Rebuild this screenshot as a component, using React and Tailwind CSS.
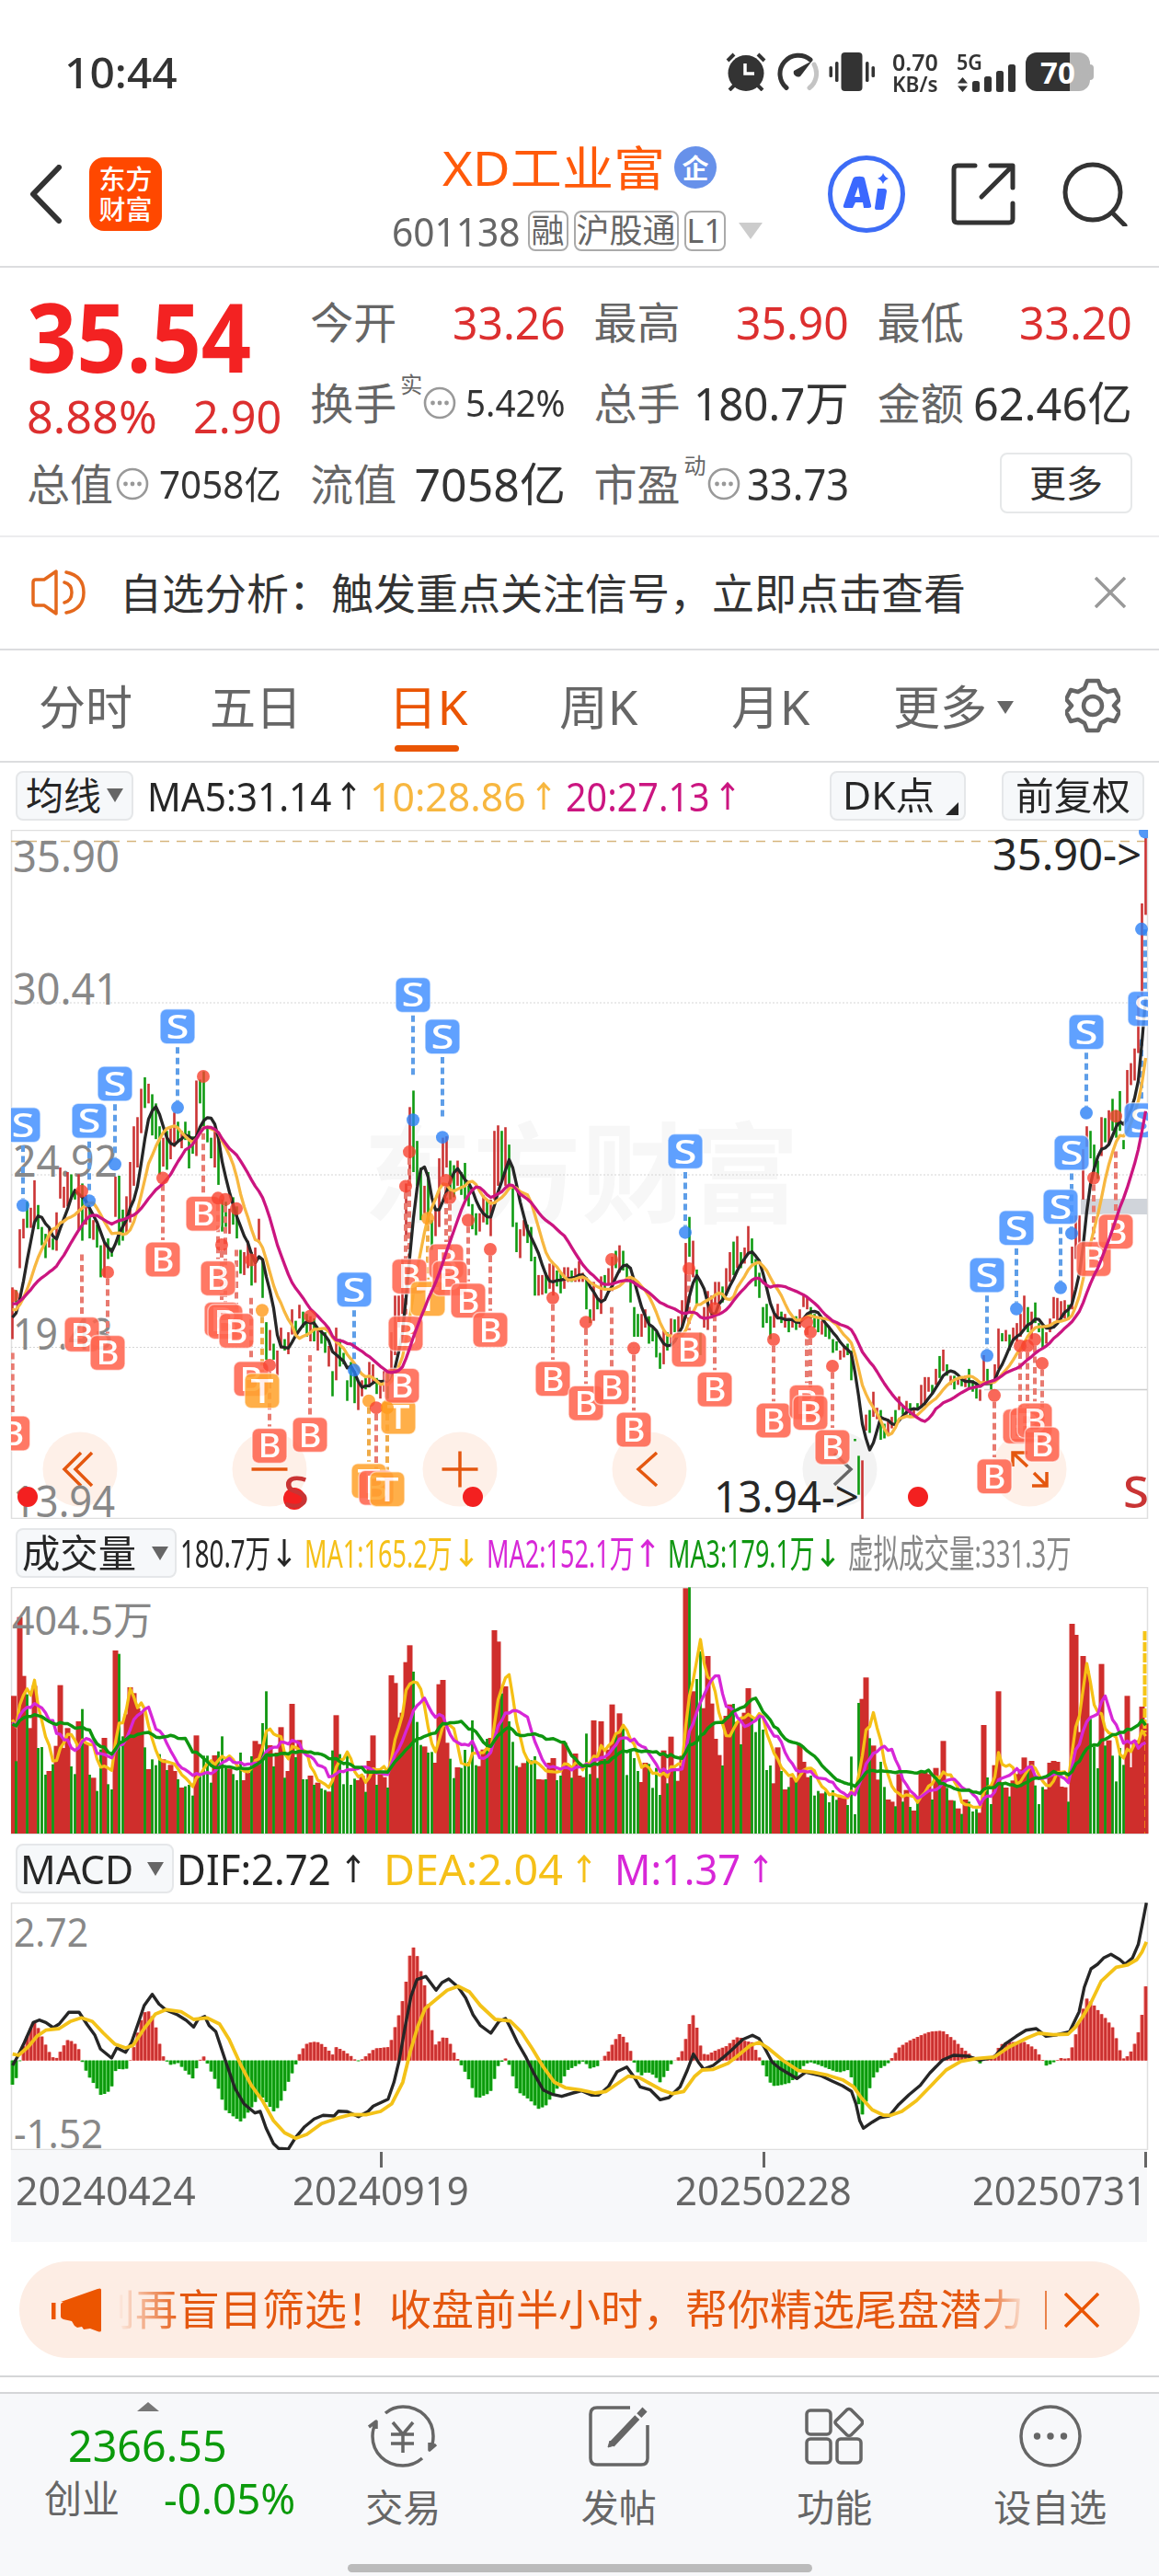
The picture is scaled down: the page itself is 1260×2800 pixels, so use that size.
import { useLayoutEffect, useRef, useState } from "react";
import clsx from "clsx";

const FONT = "font-['Noto_Sans','Noto_Sans_CJK_SC',sans-serif]";

const STEP = 4;
const FIRST_X = 13.5;
const barX = (i) => FIRST_X + i * STEP;

// Daily turnover, oldest first. Letter = candle direction, number = top edge of the bar on the plot grid.
const VOLUME = `
r385 g598 r128 r320 g380 r490 r352 g555 g552 g642 r630 g608 r548 r350 r555 r490 g615 g640 r468 g428
r540 g642 r652 g695 g560 r522 g673 g690 r237 g248 g517 r445 r357 r376 r425 r435 g553 r624 g592 g611
g575 r592 g627 r610 r630 g657 r684 g680 g675 g710 r514 g640 g580 g580 g668 r579 g566 g517 g620 r622
g640 g660 g570 r660 r635 g582 r532 r542 g474 g370 r546 g615 r570 r487 g652 r630 r411 g585 r529 g657
g657 r645 g675 r668 g687 g692 r697 g563 r448 g575 g673 g580 g675 g655 r660 r645 g698 r597 r514 g675
r640 r650 g684 r318 r343 r455 r440 r275 r220 g306 g470 g545 r550 g570 g568 r603 r347 r333 r538 g590
g653 r618 g620 g561 g600 g465 g611 r614 r560 g525 r522 r171 r208 g377 r354 g468 g535 g613 r617 r604
g594 g595 g582 r657 r658 g657 r603 r588 g660 g645 r537 r610 g652 r573 r645 r650 g508 g640 r465 g653
r468 g590 r560 r413 g510 r442 g478 g643 g565 g588 g630 r666 r603 g607 g685 g620 g708 r563 g670 r518
g620 r662 r580 r34 g31 r370 g330 g240 r425 r255 r410 r525 r578 g612 r450 r413 g411 r470 g543 r440
r360 g455 g503 g455 g495 g627 g612 r670 r553 g630 r690 g682 r650 g665 r543 r600 r650 g645 g710 g695
r703 g697 g732 g693 g724 r715 r715 g741 g583 g771 g408 r395 r325 g523 r547 r658 g600 g682 r723 r730
g745 r640 g730 r692 g747 r759 g735 r630 r632 r640 g723 r620 g650 r532 g685 r725 g727 r752 g770 r723
g730 g762 g754 r766 r480 g651 g738 r611 r370 g670 r684 g713 r661 r640 r625 r586 g620 r597 g677 g738
g682 r690 r603 r597 r600 r681 r683 g730 r150 r186 r503 r255 r303 g460 g550 g621 r281 g547 r530 g580
g664 g555 g610 r385 r618 r540 r530 r420 r475`
  .trim()
  .split(/\s+/)
  .map((s) => ({ up: s[0] === "r", top: Number(s.slice(1)) }));

// Candle extents as high,low on the price grid.
const CANDLES = `
1042,1155 1048,1075 915,1000 892,935 855,912 868,912 808,900 862,915 910,950 925,978 910,955 935,960
878,962 780,848 822,868 790,865 795,850 830,850 795,915 815,940 840,905 870,935 895,938 905,955
950,1020 945,1020 935,980 955,975 800,888 798,950 872,940 843,925 768,900 690,820 670,780 608,705
583,650 597,640 620,710 640,718 690,795 715,778 700,785 690,762 660,735 680,725 700,738 680,720
700,782 712,750 590,755 588,640 570,690 690,725 715,760 695,780 720,818 850,920 855,910 870,925
845,905 865,935 960,1012 965,1015 940,1000 965,1038 955,1032 892,945 980,1065 1118,1200 1135,1180 1165,1200
1180,1235 1130,1175 1155,1180 1140,1188 1090,1145 1115,1150 1080,1110 1095,1130 1100,1150 1105,1160 1110,1160 1130,1180
1135,1165 1140,1185 1170,1215 1225,1280 1130,1245 1155,1215 1185,1210 1245,1290 1205,1260 1225,1295 1250,1310 1245,1280
1235,1265 1205,1260 1210,1250 1240,1275 1250,1285 1225,1270 1230,1290 1140,1230 1060,1190 1060,1130 980,1100 815,940
648,820 612,790 722,820 780,895 820,880 790,900 895,960 875,930 760,910 715,800 712,780 765,850
775,845 765,820 790,840 770,850 820,865 860,915 880,928 880,920 840,900 850,905 850,930 700,850
688,820 700,810 692,820 730,820 820,910 900,965 915,978 895,930 905,945 910,985 975,1060 1015,1060
1015,1058 1010,1055 990,1045 990,1060 1005,1040 1010,1055 998,1045 998,1030 1005,1030 1000,1030 985,1030 1010,1030
1020,1090 1090,1120 1030,1115 1065,1090 1018,1100 1015,1045 1000,1035 975,1050 962,1000 950,1010 962,1005 990,1030
1020,1075 1085,1150 1100,1150 1100,1150 1090,1130 1105,1165 1130,1160 1140,1195 1185,1220 1135,1210 1140,1180 1110,1165
1112,1140 1105,1140 1070,1130 945,1110 888,975 940,1020 1003,1080 1140,1190 1085,1130 1050,1135 1060,1110 1030,1080
1030,1080 1040,1075 1000,1060 965,1030 942,1015 930,1000 965,1000 955,990 908,970 935,990 980,1040 1010,1065
1085,1130 1078,1120 1105,1155 1100,1130 1078,1110 1095,1120 1100,1130 1115,1140 1110,1130 1105,1135 1090,1130 1060,1085
1065,1090 1085,1110 1100,1130 1110,1140 1115,1145 1120,1150 1130,1155 1155,1185 1160,1180 1180,1200 1170,1195 1165,1190
1180,1245 1373,1378 1410,1495 1420,1551 1320,1355 1310,1360 1270,1325 1305,1330 1310,1375 1340,1372 1330,1365 1325,1350
1310,1345 1280,1310 1300,1320 1290,1320 1295,1325 1305,1325 1295,1310 1255,1305 1238,1300 1238,1270 1255,1275 1220,1255
1192,1240 1178,1225 1210,1235 1235,1255 1235,1265 1240,1255 1240,1258 1235,1260 1220,1262 1245,1270 1250,1285 1265,1290
1190,1250 1220,1255 1250,1265 1210,1250 1132,1220 1142,1160 1135,1160 1145,1180 1130,1160 1120,1160 1100,1150 1060,1130
1085,1140 1095,1155 1075,1120 1120,1140 1125,1175 1140,1165 1110,1140 1063,1110 1065,1115 1072,1110 1070,1110 1080,1110
953,1090 885,980 885,945 740,850 690,735 700,760 730,790 765,805 670,755 672,725 655,730 630,700
655,715 613,700 720,740 567,680 552,600 520,590 405,530 203,405 60,228`
  .trim()
  .split(/\s+/)
  .map((s) => s.split(",").map(Number));

// kind, x, dot, badge, [line start, line end]
const SIGNALS = [
  ["B", 13.7, 1060, 1361, 1185],
  ["S", 25, 863, 687],
  ["S", 97, 853, 678],
  ["S", 125, 773, 597],
  ["S", 193, 649, 472],
  ["B", 89, 832, 1145, 970],
  ["B", 117, 1009, 1185],
  ["B", 177, 803, 981],
  ["B", 221, 581, 881, 705],
  ["B", 237, 847, 1022],
  ["B", 241, 949, 1112],
  ["B", 245, 850, 1117],
  ["B", 257, 870, 1137, 960],
  ["B", 273, 982, 1242, 1065],
  ["T", 285, 1092, 1268],
  ["B", 293, 1212, 1388],
  ["B", 337, 1105, 1364, 1190],
  ["S", 385, 1223, 1047],
  ["T", 401, 1290, 1465],
  ["B", 409, 1305, 1480],
  ["T", 421, 1305, 1483],
  ["T", 433, null, 1325],
  ["B", 437, null, 1257],
  ["B", 441, 821, 1143],
  ["B", 445, 746, 1018],
  ["S", 449, 676, 403, 580],
  ["T", 465, 891, 1067],
  ["S", 481, 714, 494, 670],
  ["B", 485, 808, 985],
  ["B", 489, 846, 1022],
  ["B", 509, 895, 1071],
  ["B", 533, 959, 1135],
  ["B", 601, 1065, 1242],
  ["B", 637, 1118, 1295],
  ["B", 665, 981, 1260, 1085],
  ["B", 689, 1175, 1353],
  ["S", 745, 922, 745],
  ["B", 749, 1001, 1178],
  ["B", 777, 1088, 1265],
  ["B", 841, 1156, 1333],
  ["B", 877, 1118, 1293],
  ["B", 881, 1140, 1316],
  ["B", 905, 1214, 1391],
  ["S", 1073, 1191, 1015],
  ["B", 1081, 1278, 1455],
  ["S", 1105, 1089, 912],
  ["B", 1109, 1170, 1346],
  ["B", 1117, 1170, 1343],
  ["B", 1125, 1156, 1333],
  ["B", 1133, 1208, 1385],
  ["S", 1165, 924, 748],
  ["S", 1153, 1043, 866],
  ["S", 1181, 661, 484],
  ["B", 1189, 803, 980],
  ["B", 1213, 668, 920, 745],
  ["S", 1245, 47, 433, 260],
  ["S", 1241, 259, 677, 500],
];

const SIGNAL_FILL = { B: "#ff6650", S: "#4b95ff", T: "#ffa530" };
const SIGNAL_LINE = { B: "#e87a70", S: "#5e9ee8", T: "#efab48" };
const SIGNAL_DOT = { B: "#f8422f", S: "#2b80f5", T: "#ff9a1a" };

const HIST = `17,827 22,805 27,748 32,700 40,650 47,625 52,645 60,690 70,738 77,741 85,705 92,681 100,690 108,718 112,760 120,800
130,835 137,864 150,845 157,775 165,778 172,775 178,735 188,640 193,603 197,588 203,590 208,615 213,660 218,720 222,742 227,755
232,765 240,755 250,780 261,808 267,765 272,740 277,735 282,768 290,805 297,850 305,910 315,930 327,950 335,920 345,885 352,860
362,890 370,915 377,900 388,830 397,780 402,750 406,722 415,695 422,688 432,690 440,705 450,730 455,705 465,718 475,735 483,753
490,745 500,725 507,710 527,705 532,660 541,590 546,540 551,470 556,378 561,382 567,430 572,490 577,520 582,620 588,700 595,685
601,670 607,680 612,715 620,748 628,780 636,820 645,875 655,862 663,855 670,800 675,757 680,752 685,740 690,770 700,850 710,865
720,885 728,907 738,897 748,860 758,825 768,780 780,765 790,750 798,775 808,768 815,742 822,725 830,690 838,663 845,675 852,710
857,748 862,785 868,797 875,785 885,797 893,820 900,795 908,760 913,748 920,735 926,700 931,640 938,600 943,645 948,705 954,735
965,720 975,710 985,700 990,685 1000,670 1007,685 1018,690 1025,730 1031,755 1037,800 1045,832 1055,830 1068,822 1078,800
1085,770 1095,753 1110,765 1125,780 1135,788 1147,780 1155,820 1160,880 1167,927 1173,870 1180,810 1190,775 1200,762 1207,740
1217,705 1230,685 1245,668 1258,655 1275,652 1290,680 1302,710 1315,735 1326,758 1335,740 1345,735 1350,710 1358,690 1385,688
1400,710 1410,745 1416,767 1425,755 1435,741 1445,745 1450,710 1457,650 1464,590 1470,547 1477,560 1487,590 1495,610 1505,640
1512,690 1518,740 1522,745 1530,720 1538,680 1545,600 1551,488`;

const DIF = `17,765 24,735 33,690 45,625 53,617 62,625 72,642 80,630 93,592 107,592 118,632 128,665 136,712 151,741 158,708 170,722
178,690 188,620 195,570 206,533 215,565 225,585 240,600 252,618 262,640 268,615 277,605 283,635 292,655 305,750 318,840 330,890
345,920 352,915 360,970 370,1020 377,1036 390,1038 400,1000 412,965 425,940 437,928 452,930 458,914 470,916 485,932 498,915
505,898 525,875 533,820 540,750 548,640 556,540 564,485 576,475 590,520 598,495 607,483 620,510 630,545 640,600 650,635 664,660
675,622 684,612 690,640 700,690 712,740 722,790 735,845 748,860 760,866 775,855 787,848 800,862 810,862 823,835 835,785 848,770
857,800 866,835 880,845 893,877 905,870 920,835 930,780 938,728 945,755 952,777 965,765 978,740 990,715 1005,680 1018,667
1027,678 1035,710 1045,755 1055,775 1078,808 1090,787 1110,798 1125,815 1140,832 1152,850 1158,890 1163,945 1168,970 1180,950
1190,935 1203,930 1215,895 1230,860 1245,830 1258,790 1275,748 1290,732 1310,735 1325,748 1345,738 1360,695 1375,670 1388,650
1402,645 1415,670 1430,665 1447,655 1460,590 1467,510 1476,450 1485,435 1493,415 1503,403 1515,420 1522,435 1532,415 1540,370
1545,310 1551,235`;

const DEA = `17,728 25,732 38,705 50,670 62,650 80,645 95,622 110,610 125,622 140,660 155,695 170,708 180,700 195,645 210,598 225,583
245,590 262,615 280,610 297,630 310,680 325,760 340,830 355,880 370,945 385,985 400,1003 415,990 435,955 455,938 475,925 495,926
515,915 530,890 545,820 555,720 565,640 575,580 590,550 605,520 620,507 635,525 650,570 670,615 690,620 705,655 720,710 735,770
750,820 765,838 785,845 805,855 820,850 835,825 850,800 865,805 880,825 895,845 910,857 925,850 940,800 950,780 965,778 985,758
1000,730 1015,700 1027,690 1040,710 1060,750 1080,782 1100,787 1120,797 1140,812 1155,835 1165,870 1180,910 1195,927 1205,928
1220,915 1240,880 1260,830 1280,780 1300,752 1320,743 1345,738 1365,705 1390,675 1405,660 1425,665 1445,663 1455,640 1465,605
1475,565 1490,490 1510,445 1525,438 1538,420 1545,395 1551,362`;

const MACD_SX = 1260 / 1568;
const parsePoints = (s) => s.trim().split(/\s+/).map((p) => p.split(",").map(Number));
const macdPoints = (s) =>
  parsePoints(s)
    .map(([x, y]) => `${(x * MACD_SX).toFixed(1)},${(y / 3 - 78).toFixed(1)}`)
    .join(" ");

function sample(points, x) {
  for (let i = 1; i < points.length; i++) {
    if (x <= points[i][0]) {
      const [x0, y0] = points[i - 1];
      const [x1, y1] = points[i];
      return y0 + ((y1 - y0) * (x - x0)) / (x1 - x0);
    }
  }
  return points[points.length - 1][1];
}

// Moving average polyline; `before` holds the values that precede the visible range.
function average(values, before, n, toY) {
  const all = [...before, ...values];
  return values
    .map((_, i) => {
      const end = i + before.length + 1;
      const sum = all.slice(end - n, end).reduce((a, b) => a + b, 0);
      return `${barX(i)},${toY(sum / n).toFixed(1)}`;
    })
    .join(" ");
}

// Stretches or squeezes its text to the width of its box
const Fit = ({ className, children }) => {
  const box = useRef(null);
  const text = useRef(null);
  const [scale, setScale] = useState(1);

  useLayoutEffect(() => {
    setScale(box.current.clientWidth / text.current.offsetWidth);
  }, []);

  return (
    <span ref={box} className={clsx("flex shrink-0 leading-none", className)}>
      <span ref={text} className="shrink-0 origin-left whitespace-nowrap" style={{ transform: `scaleX(${scale})` }}>
        {children}
      </span>
    </span>
  );
};

const Arrow = ({ down, className }) => (
  <svg viewBox="0 0 18 32" className={clsx("h-8 w-[18px] shrink-0", down && "rotate-180", className)} fill="none" stroke="currentColor" strokeWidth="3">
    <path d="M9 31V3M2.5 10 9 3l6.5 7" />
  </svg>
);

const Triangle = ({ className }) => (
  <svg viewBox="0 0 18 14" preserveAspectRatio="none" className={clsx("shrink-0", className)} fill="currentColor">
    <path d="M0 0h18L9 14z" />
  </svg>
);

const Dots = () => (
  <svg viewBox="0 0 36 36" className="-mr-1 ml-[3px] h-9 w-9 shrink-0 text-[#999]" fill="none" stroke="currentColor" strokeWidth="2.6">
    <circle cx="18" cy="18" r="16" />
    <g fill="currentColor" stroke="none">
      <circle cx="10.5" cy="18" r="2.4" />
      <circle cx="18" cy="18" r="2.4" />
      <circle cx="25.5" cy="18" r="2.4" />
    </g>
  </svg>
);

const StatusBar = () => (
  <div className="flex h-[140px] items-center pl-[70px] pt-[16px] text-[#333]">
    <Fit className="w-[123px] text-[46px] font-medium">10:44</Fit>
    <svg viewBox="0 0 44 42" className="ml-[596px] h-[42px] w-11 shrink-0" fill="#333">
      <circle cx="22" cy="22.500" r="19.500" />
      <path d="m2 9 7-7M42 9l-7-7M9 36l-5 5M35 36l5 5" stroke="#333" strokeWidth="4" />
      <path d="M21 12v11h10" stroke="#fff" strokeWidth="3.500" fill="none" />
    </svg>
    <svg viewBox="0 0 46 42" className="ml-[11px] h-[42px] w-[46px] shrink-0" fill="none" strokeWidth="5" strokeLinecap="round">
      <path d="M11 38.500A20 20 0 0 1 37 8" stroke="#333" />
      <path d="M41 13a20 20 0 0 1-5 25.500" stroke="#c4c4c4" />
      <path d="M39 9 26 26a5 5 0 0 1-7-6z" fill="#333" />
    </svg>
    <svg viewBox="0 0 50 42" className="ml-[11px] h-[42px] w-[50px] shrink-0" fill="#333">
      <rect x="13.500" width="23" height="42" rx="4" />
      <rect x="7" y="10" width="3.500" height="22" rx="1.500" />
      <rect x="0.500" y="15" width="3.500" height="12" rx="1.500" />
      <rect x="40" y="10" width="3.500" height="22" rx="1.500" />
      <rect x="46.500" y="15" width="3.500" height="12" rx="1.500" />
    </svg>
    <div className="ml-[19px] flex flex-col font-semibold">
      <Fit className="w-[50px] text-[26px]">0.70</Fit>
      <Fit className="w-[50px] text-[23px]">KB/s</Fit>
    </div>
    <div className="ml-[20px] flex w-[66px] flex-col">
      <Fit className="h-[21px] w-[28px] text-[23px] font-semibold">5G</Fit>
      <svg viewBox="0 0 66 30" className="-mt-[7px] h-[30px] w-[66px]" fill="#333">
        <path d="M1 20.500 6.500 14l5.500 6.500zM1 23.500h11L6.500 30z" />
        <rect x="17" y="18" width="8" height="12" rx="2.500" />
        <rect x="30" y="13" width="8" height="17" rx="2.500" />
        <rect x="43" y="7" width="8" height="23" rx="2.500" />
        <rect x="56" y="0" width="8" height="30" rx="2.500" />
      </svg>
    </div>
    <div className="ml-[9px] flex items-center">
      <div className="flex h-[42px] w-[70px] items-center justify-center rounded-xl bg-linear-to-r from-[#333] from-69% to-[#b5b5b5] to-69% text-[33px] leading-none font-bold text-white">
        70
      </div>
      <div className="h-[17px] w-1 rounded-r bg-[#b5b5b5]" />
    </div>
  </div>
);

const Tag = ({ children, className }) => (
  <span className={clsx("flex h-11 items-center justify-center rounded-lg border-2 border-[#aaa] text-[36px] leading-none", className)}>{children}</span>
);

const Header = () => (
  <header className="flex h-[151px] border-b-2 border-[#dcdddf]">
    <div className="flex w-[360px] items-center pb-[7px] pl-8">
      <svg viewBox="0 0 36 64" className="h-16 w-9" fill="none" stroke="#333" strokeWidth="6" strokeLinecap="round" strokeLinejoin="round">
        <path d="M32 3 4 32l28 29" />
      </svg>
      <div className="ml-[29px] flex h-20 w-[79px] flex-col items-center justify-center rounded-[16px] bg-[#ff4800] text-[29px] leading-[33px] font-medium text-white">
        <span>东方</span>
        <span>财富</span>
      </div>
    </div>
    <div className="flex w-[540px] flex-col items-center pt-[12px]">
      <div className="flex h-[60px] items-center gap-2.5 text-[#ff5a0a]">
        <Fit className="w-[242px] text-[51px]">XD工业富</Fit>
        <span className="flex h-[46px] w-[46px] items-center justify-center rounded-full bg-[#6791ea] text-[29px] leading-none font-bold text-white">企</span>
      </div>
      <div className="mt-[15px] -ml-1.5 flex h-12 items-center gap-[6px] text-[#666]">
        <Fit className="mr-0.5 w-[140px] text-[43px]">601138</Fit>
        <Tag className="w-11">融</Tag>
        <Tag className="w-[114px]">沪股通</Tag>
        <Tag className="w-[45px]">L1</Tag>
        <Triangle className="ml-2 h-[18px] w-[26px] text-[#ccc]" />
      </div>
    </div>
    <div className="flex items-center pb-[7px]">
      <svg viewBox="0 0 84 84" className="h-[84px] w-[84px]">
        <circle cx="42" cy="42" r="39.500" fill="none" stroke="#3d6cf6" strokeWidth="5" />
        <path
          d="M31 23q8-1 9 2l7 29q1 3-3 3h-5l-1-6h-8l-3 6h-8q-3 0-2-3l10-28q1-3 4-3zm2 11-4 11h6zM54 36h7q3 0 3 3l-3 18q0 2-3 2h-5q-2 0-2-2zM60 19q2 5 6 6-5 2-6 6-2-5-6-6 5-2 6-6z"
          fill="#3a68ff"
          fillRule="evenodd"
        />
      </svg>
      <svg viewBox="0 0 70 68" className="ml-[50px] h-[68px] w-[70px]" fill="none" stroke="#333" strokeWidth="5" strokeLinecap="round" strokeLinejoin="round">
        <path d="M26 3H7q-4 0-4 4v54q0 4 4 4h56q4 0 4-4V44M43 3h24v24M65 5 33 37" />
      </svg>
      <svg viewBox="0 0 72 70" className="ml-[51px] h-[70px] w-[72px]" fill="none" stroke="#333" strokeWidth="5" strokeLinecap="round">
        <circle cx="33" cy="33" r="30" />
        <path d="m54 55 14 14" />
      </svg>
    </div>
  </header>
);

const Metric = ({ label, note, dots, value, size = "text-[47px]", width, red }) => (
  <div className="flex h-[88px] items-center">
    <span className="text-[47px] leading-none text-[#666]">{label}</span>
    {note && <span className="-mr-[2px] mb-10 ml-1 text-[24px] leading-none text-[#666]">{note}</span>}
    {dots && <Dots />}
    <Fit className={clsx("ml-auto", size, width, red ? "text-[#dc2f2f]" : "text-[#333]")}>{value}</Fit>
  </div>
);

const Quote = () => (
  <section className="grid h-[293px] grid-cols-4 gap-x-[31px] border-b-2 border-[#ececee] px-[29px] pt-[15px]">
    <div>
      <div className="flex h-[176px] flex-col">
        <Fit className="mt-[7px] w-[244px] text-[104px] font-bold text-[#f32222]">35.54</Fit>
        <div className="mt-[10px] flex justify-between text-[50px] text-[#dc2f2f]">
          <Fit className="w-[142px]">8.88%</Fit>
          <Fit className="w-[96px]">2.90</Fit>
        </div>
      </div>
      <Metric label="总值" dots value="7058亿" size="text-[41px]" width="w-[133px]" />
    </div>
    <div>
      <Metric label="今开" value="33.26" width="w-[123px]" size="text-[50px]" red />
      <Metric label="换手" note="实" dots value="5.42%" size="text-[40px]" width="w-[109px]" />
      <Metric label="流值" value="7058亿" width="w-[164px]" size="text-[50px]" />
    </div>
    <div>
      <Metric label="最高" value="35.90" width="w-[123px]" size="text-[50px]" red />
      <Metric label="总手" value="180.7万" width="w-[169px]" size="text-[50px]" />
      <Metric label="市盈" note="动" dots value="33.73" width="w-[111px]" size="text-[47px]" />
    </div>
    <div>
      <Metric label="最低" value="33.20" width="w-[123px]" size="text-[50px]" red />
      <Metric label="金额" value="62.46亿" width="w-[173px]" size="text-[50px]" />
      <div className="mt-[10px] ml-auto flex h-[66px] w-36 items-center justify-center rounded-lg border-2 border-[#e6e8e9] text-[40px] leading-none text-[#333]">更多</div>
    </div>
  </section>
);

const Notice = () => (
  <div className="flex h-[123px] items-center border-b-2 border-[#dcdddf] pr-9 pb-[2px] pl-[34px]">
    <svg viewBox="0 0 60 50" className="h-[50px] w-[60px]" fill="none" stroke="#e4681d" strokeWidth="3.500" strokeLinejoin="round" strokeLinecap="round">
      <path d="M27 2v46L14 39H5q-3 0-3-3V14q0-3 3-3h9zM36 14q8 2 8 11t-8 11M38 3q19 4 19 22T38 47" />
    </svg>
    <Fit className="ml-[36px] w-[920px] text-[46px] text-[#333]">自选分析：触发重点关注信号，立即点击查看</Fit>
    <svg viewBox="0 0 34 34" className="ml-auto h-[34px] w-[34px]" fill="none" stroke="#999" strokeWidth="3.500">
      <path d="m1 1 32 32M33 1 1 33" />
    </svg>
  </div>
);

const Tabs = () => (
  <nav className="flex h-[122px] items-center border-b-2 border-[#dcdddf] pt-[3px] pl-[42px] text-[51px] leading-none text-[#666]">
    <Fit className="w-[102px]">分时</Fit>
    <Fit className="ml-[84px] w-[100px]">五日</Fit>
    <div className="relative ml-[94px]">
      <Fit className="w-[87px] text-[#ea5504]">日K</Fit>
      <div className="absolute top-[67px] left-[7px] h-[7px] w-[70px] rounded-full bg-[#ea5504]" />
    </div>
    <Fit className="ml-[99px] w-[86px]">周K</Fit>
    <Fit className="ml-[101px] w-[86px]">月K</Fit>
    <Fit className="ml-[90px] w-[102px]">更多</Fit>
    <Triangle className="ml-[11px] h-[14px] w-[18px]" />
    <svg viewBox="0 0 60 60" className="mb-[4px] ml-[56px] h-[60px] w-[60px]" fill="none" stroke="#666" strokeWidth="4.500" strokeLinejoin="round">
      <path d="M24 3h12l3 8 7 4 8-2 5 10-6 7 6 7-5 10-8-2-7 4-3 8H24l-3-8-7-4-8 2-5-10 6-7-6-7 5-10 8 2 7-4z" />
      <circle cx="30" cy="30" r="10" />
    </svg>
  </nav>
);

const Chip = ({ children, className }) => (
  <div className={clsx("flex h-[54px] shrink-0 items-center rounded-lg border-2 border-[#e5e7e9] bg-[#f6f8fa] leading-none text-[#262626]", className)}>{children}</div>
);

const priceY = (v) => v / 2.0103 - 21;

const SignalLine = ({ signal: [kind, x, dot, badge, edge] }) => {
  if (dot === null) return null;
  // a sell badge can sit above or below its candle; the line stops short of both ends
  const above = kind === "S" && !(edge && dot < badge);
  const from = above ? badge + 45 : (edge ?? dot + 14);
  const to = above ? (edge ?? dot - 14) : badge - 42;
  return <path d={`M${x} ${priceY(from)}V${priceY(to)}`} stroke={SIGNAL_LINE[kind]} strokeWidth="4" strokeDasharray="7 4.500" />;
};

const SignalBadge = ({ signal: [kind, x, , badge] }) => (
  <g opacity="0.88">
    <rect x={x - 19} y={priceY(badge) - 19} width="38" height="38" rx="7" fill={SIGNAL_FILL[kind]} stroke="#fff" strokeOpacity="0.6" strokeWidth="1.500" />
    <text x={x - 12.5} y={priceY(badge) + 13} textLength="25" lengthAdjust="spacingAndGlyphs" fontSize="36" fontWeight="500" fill="#fff">
      {kind}
    </text>
  </g>
);

const CONTROLS = [
  ["M88-18 70 0l18 18M100-18 82 0l18 18", 87],
  ["M-19.500 0h39", 293],
  ["M-19.500 0h39M0-19.500v39", 500],
  ["M8-18-12 0 8 18", 706],
  ["M-6-17 12 0-6 17", 913],
  ["M-2-3-18-18M-18-3v-15h16M5 4 19 18M19 3v15H3", 1119],
];

const PriceChart = () => {
  const mids = CANDLES.map(([hi, lo]) => (hi + lo) / 2);
  const before = [...Array(15).fill(1065), ...Array(5).fill(1110)];
  return (
    <svg viewBox="0 0 1260 749" className="block h-[749px] w-[1260px]">
      <defs>
        <clipPath id="price-plot">
          <rect x="12" y="0" width="1236" height="749" />
        </clipPath>
      </defs>
      <text x="395" y="418" fontSize="118" fontWeight="700" fill="#f7f7f7" textLength="474">东方财富</text>
      <rect x="12.500" y="0.500" width="1235" height="748" fill="none" stroke="#dfdfdf" strokeWidth="1.500" />
      {[188, 375, 562.5].map((y) => (
        <path key={y} d={`M12 ${y}h1235`} stroke="#d5d5d5" strokeDasharray="2 2" />
      ))}
      <path d="M12 12.500h1235" stroke="#d6b57d" strokeWidth="1.500" strokeDasharray="10 8" />
      <path d="M1070 608.500h177" stroke="#ccc" strokeWidth="1.500" />
      <rect x="1175" y="401" width="72" height="17" fill="#d0d4da" />

      {CONTROLS.map(([d, x]) => (
        <g key={x}>
          <circle cx={x} cy="695" r="40.500" fill={x === 913 ? "#f3f3f3" : "#fef0e8"} />
          <path d={d} transform={`translate(${x === 87 ? 0 : x} 695)`} fill="none" stroke={x === 913 ? "#666" : "#e4570f"} strokeWidth="3.500" />
        </g>
      ))}

      <g fontSize="47" fill="#888">
        <text x="14" y="46" textLength="116" lengthAdjust="spacingAndGlyphs">35.90</text>
        <text x="14" y="190" textLength="115" lengthAdjust="spacingAndGlyphs">30.41</text>
        <text x="14" y="377" textLength="114" lengthAdjust="spacingAndGlyphs">24.92</text>
        <text x="14" y="565" textLength="109" lengthAdjust="spacingAndGlyphs">19.43</text>
        <text x="14" y="747" textLength="111" lengthAdjust="spacingAndGlyphs">13.94</text>
      </g>
      <g fontSize="47" fill="#262626">
        <text x="1079" y="44" textLength="162" lengthAdjust="spacingAndGlyphs">35.90-&gt;</text>
        <text x="776" y="742" textLength="158" lengthAdjust="spacingAndGlyphs">13.94-&gt;</text>
      </g>

      <g clipPath="url(#price-plot)">
        {CANDLES.map(([hi, lo], i) => (
          <rect key={i} x={barX(i) - 1.3} y={priceY(hi)} width="2.600" height={(lo - hi) / 2.0103} fill={VOLUME[i].up ? "#cb3434" : "#0f9b12"} />
        ))}
        {SIGNALS.map((s, i) => (
          <SignalLine key={i} signal={s} />
        ))}
        <g fill="none" strokeWidth="3.300" strokeLinejoin="round">
          <polyline points={average(mids, before, 5, priceY)} stroke="#262626" />
          <polyline points={average(mids, before, 10, priceY)} stroke="#f7b740" />
        </g>
        {SIGNALS.map((s, i) => (
          <SignalBadge key={i} signal={s} />
        ))}
        <polyline points={average(mids, before, 20, priceY)} fill="none" stroke="#cb1580" strokeWidth="3.300" strokeLinejoin="round" />
        {SIGNALS.filter((s) => s[2] !== null).map(([kind, x, dot], i) => (
          <circle key={i} cx={x} cy={priceY(dot)} r="7" fill={SIGNAL_DOT[kind]} opacity="0.8" />
        ))}
        <g fill="#f32020">
          <circle cx="30" cy="725" r="11" />
          <circle cx="320" cy="727" r="12" />
          <circle cx="514" cy="725" r="11" />
          <circle cx="998" cy="725" r="11" />
        </g>
        <g fill="#c93434" fontSize="48" fontWeight="500">
          <text x="308" y="737" textLength="28" lengthAdjust="spacingAndGlyphs">S</text>
          <text x="1221" y="737" textLength="28" lengthAdjust="spacingAndGlyphs">S</text>
        </g>
      </g>
    </svg>
  );
};

const volumeY = (v) => v / 3 - 10;

const VolumeChart = () => {
  const tops = VOLUME.map((b) => b.top);
  const before = Array(20).fill(482);
  return (
    <svg viewBox="0 0 1260 269" className="block h-[269px] w-[1260px]">
      <rect x="12.500" y="0.500" width="1235" height="268" fill="none" stroke="#dfdfdf" strokeWidth="1.500" />
      {VOLUME.map(({ up, top }, i) =>
        up ? <rect key={i} x={Math.max(barX(i) - 3, 12)} y={volumeY(top)} width="6" height={268 - volumeY(top)} fill="#cf2e2c" /> : null
      )}
      {VOLUME.map(({ up, top }, i) =>
        up ? null : <rect key={i} x={barX(i) - 1.4} y={volumeY(top)} width="2.800" height={268 - volumeY(top)} fill="#109610" />
      )}
      <path d="M1244.500 48v110" stroke="#f5c518" strokeWidth="4" strokeDasharray="10 2" />
      <path d="M1244.500 158v110" stroke="#f0801a" strokeWidth="1" strokeDasharray="8 4" />
      <g fill="none" strokeWidth="3.300" strokeLinejoin="round">
        <polyline points={average(tops, before, 5, volumeY)} stroke="#f5c015" />
        <polyline points={average(tops, before, 10, volumeY)} stroke="#d727d7" />
        <polyline points={average(tops, before, 20, volumeY)} stroke="#0f9610" strokeWidth="3.500" />
      </g>
      <text x="13" y="52" fontSize="43" fill="#888" textLength="153" lengthAdjust="spacingAndGlyphs">404.5万</text>
    </svg>
  );
};

const MacdChart = () => {
  const hist = parsePoints(HIST);
  const zero = 749 / 3 - 78;
  return (
    <svg viewBox="0 0 1260 269" className="block h-[269px] w-[1260px]">
      <rect x="12.500" y="0.500" width="1235" height="268" fill="none" stroke="#dfdfdf" strokeWidth="1.500" />
      <text x="15" y="48" fontSize="44" fill="#888" textLength="81" lengthAdjust="spacingAndGlyphs">2.72</text>
      <text x="15" y="267" fontSize="44" fill="#888" textLength="97" lengthAdjust="spacingAndGlyphs">-1.52</text>
      <g>
        {CANDLES.map((_, i) => {
          const y = sample(hist, barX(i) / MACD_SX) / 3 - 78;
          const up = y < zero;
          return (
            <g key={i}>
              <rect x={barX(i) - 2} y={Math.min(y, zero)} width="4" height={Math.abs(y - zero)} fill={up ? "#ea5a55" : "#35bd35"} />
              <rect x={barX(i) - 1} y={Math.min(y, zero)} width="2.400" height={Math.abs(y - zero)} fill={up ? "#c93030" : "#0b980b"} />
            </g>
          );
        })}
      </g>
      <g fill="none" strokeWidth="3.400" strokeLinejoin="round">
        <polyline points={macdPoints(DIF)} stroke="#262626" />
        <polyline points={macdPoints(DEA)} stroke="#f3c218" strokeWidth="3.800" />
      </g>
    </svg>
  );
};

const Charts = () => (
  <section>
    <div className="flex h-[73px] items-center pb-0.5 pl-[17px]">
      <Chip className="w-32 pl-[9px] text-[41px]">
        <Fit className="w-[82px]">均线</Fit>
        <Triangle className="ml-1.5 h-[15px] w-[18px] text-[#666]" />
      </Chip>
      <Fit className="ml-[15px] w-[200px] text-[44px] text-[#262626]">MA5:31.14</Fit>
      <Arrow className="ml-[10px] text-[#262626]" />
      <Fit className="ml-[14px] w-[170px] text-[44px] text-[#f7b740]">10:28.86</Fit>
      <Arrow className="ml-[10px] text-[#f7b740]" />
      <Fit className="ml-[15px] w-[157px] text-[44px] text-[#cb1580]">20:27.13</Fit>
      <Arrow className="ml-[10px] text-[#cb1580]" />
      <Chip className="ml-auto w-[148px] pl-3 text-[41px]">
        <Fit className="w-[100px]">DK点</Fit>
        <svg viewBox="0 0 14 14" className="mt-7 ml-3 h-3.5 w-3.5" fill="#262626">
          <path d="M14 0v14H0z" />
        </svg>
      </Chip>
      <Chip className="mr-[16px] ml-[39px] w-[155px] justify-center text-[41px]">
        <Fit className="w-[125px]">前复权</Fit>
      </Chip>
    </div>
    <PriceChart />

    <div className="flex h-[74px] items-center pl-[17px] text-[42px]">
      <Chip className="w-[175px] pl-[5px]">
        <Fit className="w-[124px]">成交量</Fit>
        <Triangle className="ml-[17px] h-[15px] w-[18px] text-[#666]" />
      </Chip>
      <Fit className="ml-1 w-[98px] text-[#262626]">180.7万</Fit>
      <Arrow down className="ml-[6px] text-[#262626]" />
      <Fit className="ml-[13px] w-[161px] text-[#f5c018]">MA1:165.2万</Fit>
      <Arrow down className="ml-[6px] text-[#f5c018]" />
      <Fit className="ml-[13px] w-[161px] text-[#d727d7]">MA2:152.1万</Fit>
      <Arrow className="ml-[5px] text-[#d727d7]" />
      <Fit className="ml-[13px] w-[160px] text-[#0f9610]">MA3:179.1万</Fit>
      <Arrow down className="ml-[5px] text-[#0f9610]" />
      <Fit className="ml-[13px] w-[243px] text-[#888]">虚拟成交量:331.3万</Fit>
    </div>
    <VolumeChart />

    <div className="flex h-[74px] items-center pl-[17px] text-[45px]">
      <Chip className="w-[172px] pl-[3px] text-[43px]">
        <Fit className="w-[123px]">MACD</Fit>
        <Triangle className="ml-[15px] h-[15px] w-[18px] text-[#666]" />
      </Chip>
      <Fit className="ml-[3px] w-[168px] text-[#262626]">DIF:2.72</Fit>
      <Arrow className="ml-[15px] text-[#262626]" />
      <Fit className="ml-[24px] w-[195px] text-[#f5c018]">DEA:2.04</Fit>
      <Arrow className="ml-[14px] text-[#f5c018]" />
      <Fit className="ml-[24px] w-[137px] text-[#d727d7]">M:1.37</Fit>
      <Arrow className="ml-[13px] text-[#d727d7]" />
    </div>
    <MacdChart />

    <div className="mr-[13px] ml-3 h-[100px] bg-[#f7f8fa] text-[43px] text-[#666]">
      <div className="flex h-[19px] items-end justify-between pl-[401px]">
        <div className="h-[17px] w-[3px] bg-[#666]" />
        <div className="h-[17px] w-[3px] bg-[#666]" />
        <div className="h-[17px] w-[3px] bg-[#666]" />
      </div>
      <div className="flex pt-[3px] pl-[5px]">
        <Fit className="w-[196px]">20240424</Fit>
        <Fit className="ml-[105px] w-[192px]">20240919</Fit>
        <Fit className="ml-[224px] w-[192px]">20250228</Fit>
        <Fit className="ml-[131px] w-[190px]">20250731</Fit>
      </div>
    </div>
  </section>
);

const Banner = () => (
  <div className="mx-[21px] mt-[21px] flex h-[105px] items-center rounded-full bg-[#fdede4] pl-[35px] text-[#e4570f]">
    <svg viewBox="0 0 56 48" className="h-12 w-14 shrink-0" fill="#ec5500">
      <path d="M0 16h4.500v18H0zM10 15 50 1q4-1.500 4 1v44q0 2.500-4 1l-8-3-7 1-2-3-5 1-3-2-3-5-9-2q-3-1-3-3V18q0-2 3-3z" />
    </svg>
    <div className="ml-4 w-[988px] overflow-hidden pb-[3px] mask-[linear-gradient(to_right,transparent,black_7%,black_95%,transparent)]">
      <Fit className="-ml-[27px] w-[1012px] text-[46px]">别再盲目筛选！收盘前半小时，帮你精选尾盘潜力</Fit>
    </div>
    <div className="ml-[20px] h-[42px] w-0.5 bg-[#e9824a]" />
    <svg viewBox="0 0 38 38" className="ml-[19px] h-[38px] w-[38px] shrink-0" fill="none" stroke="#ea5504" strokeWidth="3.500">
      <path d="m1 1 36 36M37 1 1 37" />
    </svg>
  </div>
);

const TradeIcon = () => (
  <svg viewBox="0 0 78 68" className="h-[68px] w-[78px]" fill="none" stroke="#666" strokeWidth="3.500" strokeLinejoin="round">
    <path d="M20 9Q28 2 39 2c19 0 33 14 33 32q0 8-3 14M75 43l-7 6v-8M60 58q-9 8-21 8C20 66 6 52 6 34q0-8 4-15M2 24l8-6v8" />
    <path d="m28 19 11 13 11-13M26 32h25M26 42h25M39 32v20" />
  </svg>
);

const PostIcon = () => (
  <svg viewBox="0 0 66 66" className="h-[66px] w-[66px]" fill="none" stroke="#666" strokeWidth="3.500">
    <path d="M45 2H9Q2 2 2 9v48q0 7 7 7h48q7 0 7-7V21" />
    <path d="M61 4 25 42" strokeWidth="7" strokeDasharray="9 3 60" />
    <path d="m23 38-2 7 7-2z" fill="#666" strokeWidth="1" />
  </svg>
);

const GridIcon = () => (
  <svg viewBox="0 0 64 64" className="h-16 w-16" fill="none" stroke="#666" strokeWidth="3.500" strokeLinejoin="round">
    <rect x="2" y="4" width="26" height="26" rx="4" />
    <rect x="2" y="35" width="26" height="26" rx="4" />
    <rect x="35" y="35" width="26" height="26" rx="4" />
    <path d="m46 3-12 12q-2 2 0 4l12 12q2 1 4 0l12-12q1-2 0-4L50 3q-2-1-4 0z" />
  </svg>
);

const MoreIcon = () => (
  <svg viewBox="0 0 68 68" className="h-[68px] w-[68px]" fill="none" stroke="#666" strokeWidth="3.500">
    <circle cx="34" cy="34" r="32" />
    <g fill="#666" stroke="none">
      <circle cx="19.500" cy="34" r="3.700" />
      <circle cx="34" cy="34" r="3.700" />
      <circle cx="48.500" cy="34" r="3.700" />
    </g>
  </svg>
);

const NAV = [
  { label: "交易", Icon: TradeIcon },
  { label: "发帖", Icon: PostIcon },
  { label: "功能", Icon: GridIcon },
  { label: "设自选", Icon: MoreIcon },
];

const BottomNav = () => (
  <footer className="mt-[19px] border-t-2 border-[#d5d6d8] pt-[16px]">
    <div className="flex h-[200px] flex-col border-t-2 border-[#d5d6d8] bg-[#f7f8fa]">
      <div className="flex h-[185px]">
        <div className="flex w-[321px] flex-col items-center pt-[9px] text-[#0b9a0b]">
          <Triangle className="h-2.5 w-6 rotate-180 text-[#777]" />
          <Fit className="mt-[13px] w-[173px] text-[48px]">2366.55</Fit>
          <div className="mt-[11px] ml-[48px] flex w-[273px] items-center justify-between self-start text-[41px] leading-none">
            <span className="text-[#666]">创业</span>
            <Fit className="w-[143px] text-[45px]">-0.05%</Fit>
          </div>
        </div>
        {NAV.map(({ label, Icon }) => (
          <div key={label} className="flex w-[234.5px] flex-col items-center pt-[11px]">
            <div className="flex h-[70px] items-center">
              <Icon />
            </div>
            <span className="mt-[22px] text-[41px] leading-none text-[#666]">{label}</span>
          </div>
        ))}
      </div>
      <div className="mx-auto h-[9px] w-[505px] rounded-full bg-[#bbb]" />
    </div>
  </footer>
);

export default function App() {
  return (
    <div className={clsx("h-[2800px] w-[1260px] overflow-hidden bg-white", FONT)}>
      <StatusBar />
      <Header />
      <Quote />
      <Notice />
      <Tabs />
      <Charts />
      <Banner />
      <BottomNav />
    </div>
  );
}
